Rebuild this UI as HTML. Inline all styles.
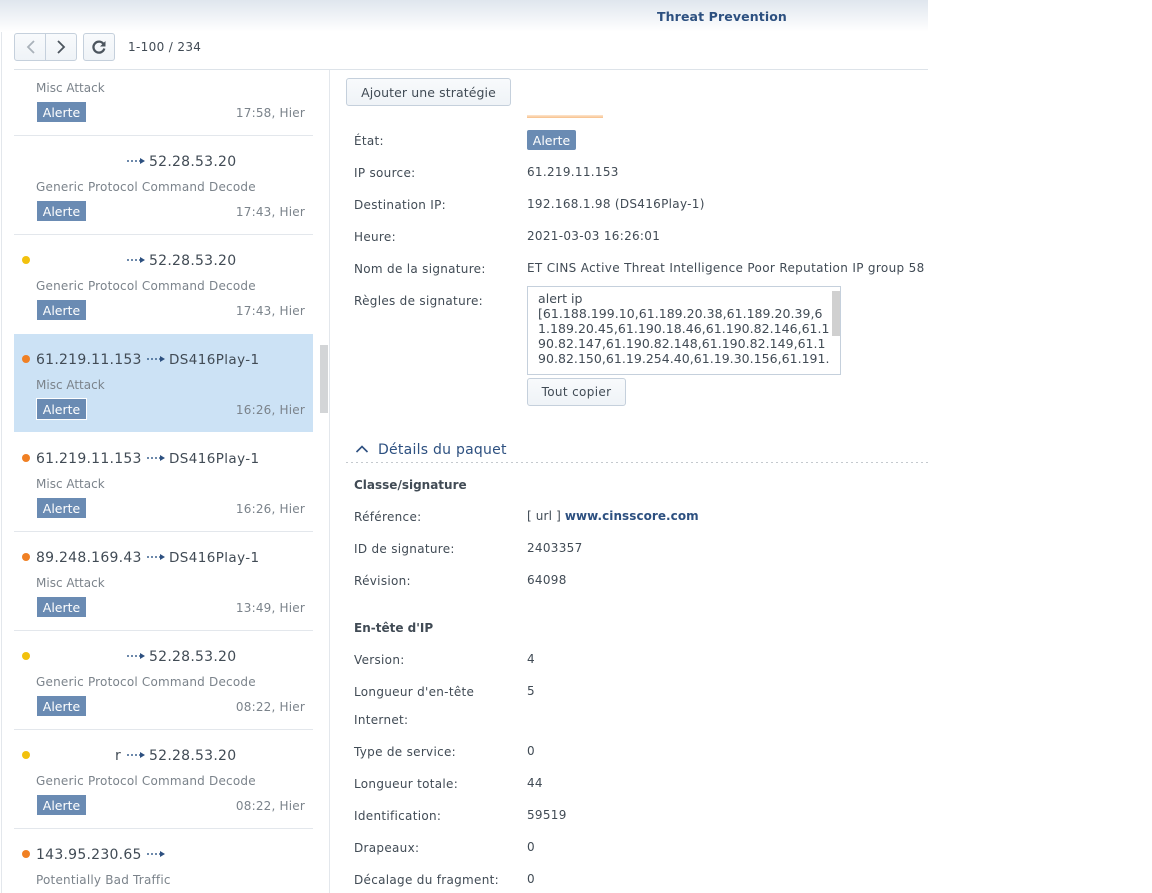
<!DOCTYPE html>
<html><head><meta charset="utf-8"><title>Threat Prevention</title>
<style>
html,body{margin:0;padding:0;background:#fff;width:1152px;height:893px;overflow:hidden}
body{position:relative;font-family:"DejaVu Sans",sans-serif;font-size:12px;color:#414b55}
.t{position:absolute;white-space:nowrap;line-height:16px;height:16px}
.b{position:absolute}
.ip{font-size:14px;letter-spacing:.25px;color:#414b55;margin-top:1px}
.ds{font-size:13.5px;letter-spacing:.4px}
.sub{font-size:12px;letter-spacing:.2px;color:#7b838b}
.time{color:#7b838b;font-size:12px;letter-spacing:.2px;right:847px}
.tag{position:absolute;left:37px;width:49px;height:20px;background:#6a8bb3;color:#fff;font-size:12.5px;line-height:21px;text-align:center}
.sep{position:absolute;left:14px;width:299px;height:1px;background:#e3e7ec}
.dot{position:absolute;left:22px;width:8px;height:8px;border-radius:50%}
.o{background:#f08024}.y{background:#f2c10d}
.btn{position:absolute;box-sizing:border-box;border:1px solid #c5d0dc;border-radius:3px;background:linear-gradient(#f8fafc,#eff3f7);text-align:center;color:#414b55}
.arrow{position:absolute;width:38px;height:8px}
.l{left:354px;letter-spacing:.3px}.v{left:527px;letter-spacing:.3px}
.bd{letter-spacing:0;font-weight:bold;margin-top:1px}
.ta{left:538px;font-size:12.5px;letter-spacing:.03px}
</style></head><body>
<div class="b" style="left:0;top:0;width:928px;height:32px;background:linear-gradient(#dfe6ee,#ffffff)"></div>
<div class="t" style="left:657px;top:9px;font-weight:bold;font-size:12.5px;letter-spacing:.12px;color:#2d5080">Threat Prevention</div>
<div class="b" style="left:1px;top:32px;width:1px;height:861px;background:#e3e7ec"></div>
<div class="b" style="left:14px;top:69px;width:914px;height:1px;background:#dde3e9"></div>
<div class="b" style="left:329px;top:70px;width:1px;height:823px;background:#e3e7ec"></div>

<div class="btn" style="left:14px;top:33px;width:63px;height:28px"></div>
<div class="b" style="left:45px;top:34px;width:1px;height:26px;background:#c5d0dc"></div>
<svg class="b" style="left:14px;top:33px" width="63" height="28" fill="none"><path d="M20 8l-6 6 6 6" stroke="#aab2ba" stroke-width="1.8"/><path d="M44 8l6 6-6 6" stroke="#4c555e" stroke-width="1.8"/></svg>
<div class="btn" style="left:83px;top:33px;width:32px;height:28px"></div>
<svg class="b" style="left:83px;top:33px" width="32" height="28" fill="none"><path d="M20.500 11a5.500 5.500 0 1 0 .8 4.500" stroke="#4c555e" stroke-width="2.300"/><path d="M22.500 8v5.500h-5.500z" fill="#4c555e"/></svg>
<div class="t" style="left:128px;top:39px;letter-spacing:.35px">1-100 / 234</div>

<div class="t sub" style="left:36px;top:80px;letter-spacing:0">Misc Attack</div>
<div class="tag" style="top:102px">Alerte</div><div class="t time" style="top:105px">17:58, Hier</div>
<div class="sep" style="top:135px"></div>

<svg class="arrow" style="left:127px;top:157px"><path d="M0 4h13" stroke="#3d628f" stroke-width="1.500" stroke-dasharray="2 2"/><path d="M13 1l5 3-5 3z" fill="#2d5080"/></svg>
<div class="t ip" style="left:149px;top:153px">52.28.53.20</div>
<div class="t sub" style="left:36px;top:179px">Generic Protocol Command Decode</div>
<div class="tag" style="top:201px">Alerte</div><div class="t time" style="top:204px">17:43, Hier</div>
<div class="sep" style="top:234px"></div>

<div class="dot y" style="top:256px"></div>
<svg class="arrow" style="left:127px;top:256px"><path d="M0 4h13" stroke="#3d628f" stroke-width="1.500" stroke-dasharray="2 2"/><path d="M13 1l5 3-5 3z" fill="#2d5080"/></svg>
<div class="t ip" style="left:149px;top:252px">52.28.53.20</div>
<div class="t sub" style="left:36px;top:278px">Generic Protocol Command Decode</div>
<div class="tag" style="top:300px">Alerte</div><div class="t time" style="top:303px">17:43, Hier</div>

<div class="b" style="left:14px;top:334px;width:299px;height:98px;background:#cce2f5"></div>
<div class="dot o" style="top:355px"></div>
<div class="t ip" style="left:36px;top:351px">61.219.11.153</div>
<svg class="arrow" style="left:147px;top:355px"><path d="M0 4h13" stroke="#3d628f" stroke-width="1.500" stroke-dasharray="2 2"/><path d="M13 1l5 3-5 3z" fill="#2d5080"/></svg>
<div class="t ip ds" style="left:169px;top:351px">DS416Play-1</div>
<div class="t sub" style="left:36px;top:377px;letter-spacing:0">Misc Attack</div>
<div class="tag" style="top:399px;outline:1px solid #fff">Alerte</div><div class="t time" style="top:402px">16:26, Hier</div>
<div class="b" style="left:320px;top:345px;width:8px;height:68px;background:#d3d5d7"></div>

<div class="dot o" style="top:454px"></div>
<div class="t ip" style="left:36px;top:450px">61.219.11.153</div>
<svg class="arrow" style="left:147px;top:454px"><path d="M0 4h13" stroke="#3d628f" stroke-width="1.500" stroke-dasharray="2 2"/><path d="M13 1l5 3-5 3z" fill="#2d5080"/></svg>
<div class="t ip ds" style="left:169px;top:450px">DS416Play-1</div>
<div class="t sub" style="left:36px;top:476px;letter-spacing:0">Misc Attack</div>
<div class="tag" style="top:498px">Alerte</div><div class="t time" style="top:501px">16:26, Hier</div>
<div class="sep" style="top:531px"></div>

<div class="dot o" style="top:553px"></div>
<div class="t ip" style="left:36px;top:549px">89.248.169.43</div>
<svg class="arrow" style="left:147px;top:553px"><path d="M0 4h13" stroke="#3d628f" stroke-width="1.500" stroke-dasharray="2 2"/><path d="M13 1l5 3-5 3z" fill="#2d5080"/></svg>
<div class="t ip ds" style="left:169px;top:549px">DS416Play-1</div>
<div class="t sub" style="left:36px;top:575px;letter-spacing:0">Misc Attack</div>
<div class="tag" style="top:597px">Alerte</div><div class="t time" style="top:600px">13:49, Hier</div>
<div class="sep" style="top:630px"></div>

<div class="dot y" style="top:652px"></div>
<svg class="arrow" style="left:127px;top:652px"><path d="M0 4h13" stroke="#3d628f" stroke-width="1.500" stroke-dasharray="2 2"/><path d="M13 1l5 3-5 3z" fill="#2d5080"/></svg>
<div class="t ip" style="left:149px;top:648px">52.28.53.20</div>
<div class="t sub" style="left:36px;top:674px">Generic Protocol Command Decode</div>
<div class="tag" style="top:696px">Alerte</div><div class="t time" style="top:699px">08:22, Hier</div>
<div class="sep" style="top:729px"></div>

<div class="dot y" style="top:751px"></div>
<div class="t ip" style="left:115px;top:747px">r</div>
<svg class="arrow" style="left:127px;top:751px"><path d="M0 4h13" stroke="#3d628f" stroke-width="1.500" stroke-dasharray="2 2"/><path d="M13 1l5 3-5 3z" fill="#2d5080"/></svg>
<div class="t ip" style="left:149px;top:747px">52.28.53.20</div>
<div class="t sub" style="left:36px;top:773px">Generic Protocol Command Decode</div>
<div class="tag" style="top:795px">Alerte</div><div class="t time" style="top:798px">08:22, Hier</div>
<div class="sep" style="top:828px"></div>

<div class="dot o" style="top:850px"></div>
<div class="t ip" style="left:36px;top:846px">143.95.230.65</div>
<svg class="arrow" style="left:147px;top:850px"><path d="M0 4h13" stroke="#3d628f" stroke-width="1.500" stroke-dasharray="2 2"/><path d="M13 1l5 3-5 3z" fill="#2d5080"/></svg>
<div class="t sub" style="left:36px;top:872px">Potentially Bad Traffic</div>

<div class="btn" style="left:346px;top:78px;width:165px;height:28px;line-height:27px;font-size:12.5px;letter-spacing:.1px">Ajouter une stratégie</div>
<div class="b" style="left:527px;top:115px;width:76px;height:3px;background:linear-gradient(#fde6d0,#f7c08a)"></div>

<div class="t l" style="top:133px">État:</div>
<div class="b" style="left:527px;top:130px;width:49px;height:20px;border-radius:2px;background:#6a8bb3;color:#fff;font-size:12.5px;line-height:21px;text-align:center">Alerte</div>
<div class="t l" style="top:165px">IP source:</div><div class="t v" style="top:164px">61.219.11.153</div>
<div class="t l" style="top:197px">Destination IP:</div><div class="t v" style="top:196px">192.168.1.98 (DS416Play-1)</div>
<div class="t l" style="top:229px">Heure:</div><div class="t v" style="top:228px">2021-03-03 16:26:01</div>
<div class="t l" style="top:261px">Nom de la signature:</div><div class="t v" style="top:260px;letter-spacing:.34px">ET CINS Active Threat Intelligence Poor Reputation IP group 58</div>
<div class="t l" style="top:293px">Règles de signature:</div>

<div class="b" style="left:527px;top:286px;width:312px;height:87px;border:1px solid #c5d0dc;background:#fff"></div>
<div class="b" style="left:832px;top:291px;width:8px;height:45px;background:#d0d0d0"></div>
<div class="t ta" style="top:291px">alert ip</div>
<div class="t ta" style="top:306px">[61.188.199.10,61.189.20.38,61.189.20.39,6</div>
<div class="t ta" style="top:321px">1.189.20.45,61.190.18.46,61.190.82.146,61.1</div>
<div class="t ta" style="top:336px">90.82.147,61.190.82.148,61.190.82.149,61.1</div>
<div class="t ta" style="top:351px">90.82.150,61.19.254.40,61.19.30.156,61.191.</div>
<div class="btn" style="left:527px;top:378px;width:99px;height:28px;line-height:27px;letter-spacing:.35px">Tout copier</div>

<svg class="b" style="left:355px;top:443px" width="16" height="12" fill="none"><path d="M1.500 9l5.500-5.500 5.500 5.500" stroke="#2d5080" stroke-width="1.600"/></svg>
<div class="t" style="left:378px;top:442px;font-size:14px;letter-spacing:.25px;color:#2d5080">Détails du paquet</div>
<div class="b" style="left:346px;top:462px;width:582px;height:1px;background:repeating-linear-gradient(90deg,#c4c9ce 0 2px,transparent 2px 5px)"></div>

<div class="t l bd" style="top:476px">Classe/signature</div>
<div class="t l" style="top:509px">Référence:</div><div class="t v" style="top:508px;letter-spacing:.15px">[ url ] <b style="color:#2d5080;letter-spacing:.05px">www.cinsscore.com</b></div>
<div class="t l" style="top:541px">ID de signature:</div><div class="t v" style="top:540px">2403357</div>
<div class="t l" style="top:573px">Révision:</div><div class="t v" style="top:572px">64098</div>
<div class="t l bd" style="top:619px">En-tête d'IP</div>
<div class="t l" style="top:652px">Version:</div><div class="t v" style="top:651px">4</div>
<div class="t l" style="top:684px">Longueur d'en-tête</div><div class="t v" style="top:683px">5</div>
<div class="t l" style="top:712px">Internet:</div>
<div class="t l" style="top:744px">Type de service:</div><div class="t v" style="top:743px">0</div>
<div class="t l" style="top:776px">Longueur totale:</div><div class="t v" style="top:775px">44</div>
<div class="t l" style="top:808px">Identification:</div><div class="t v" style="top:807px">59519</div>
<div class="t l" style="top:840px">Drapeaux:</div><div class="t v" style="top:839px">0</div>
<div class="t l" style="top:872px">Décalage du fragment:</div><div class="t v" style="top:871px">0</div>
</body></html>
